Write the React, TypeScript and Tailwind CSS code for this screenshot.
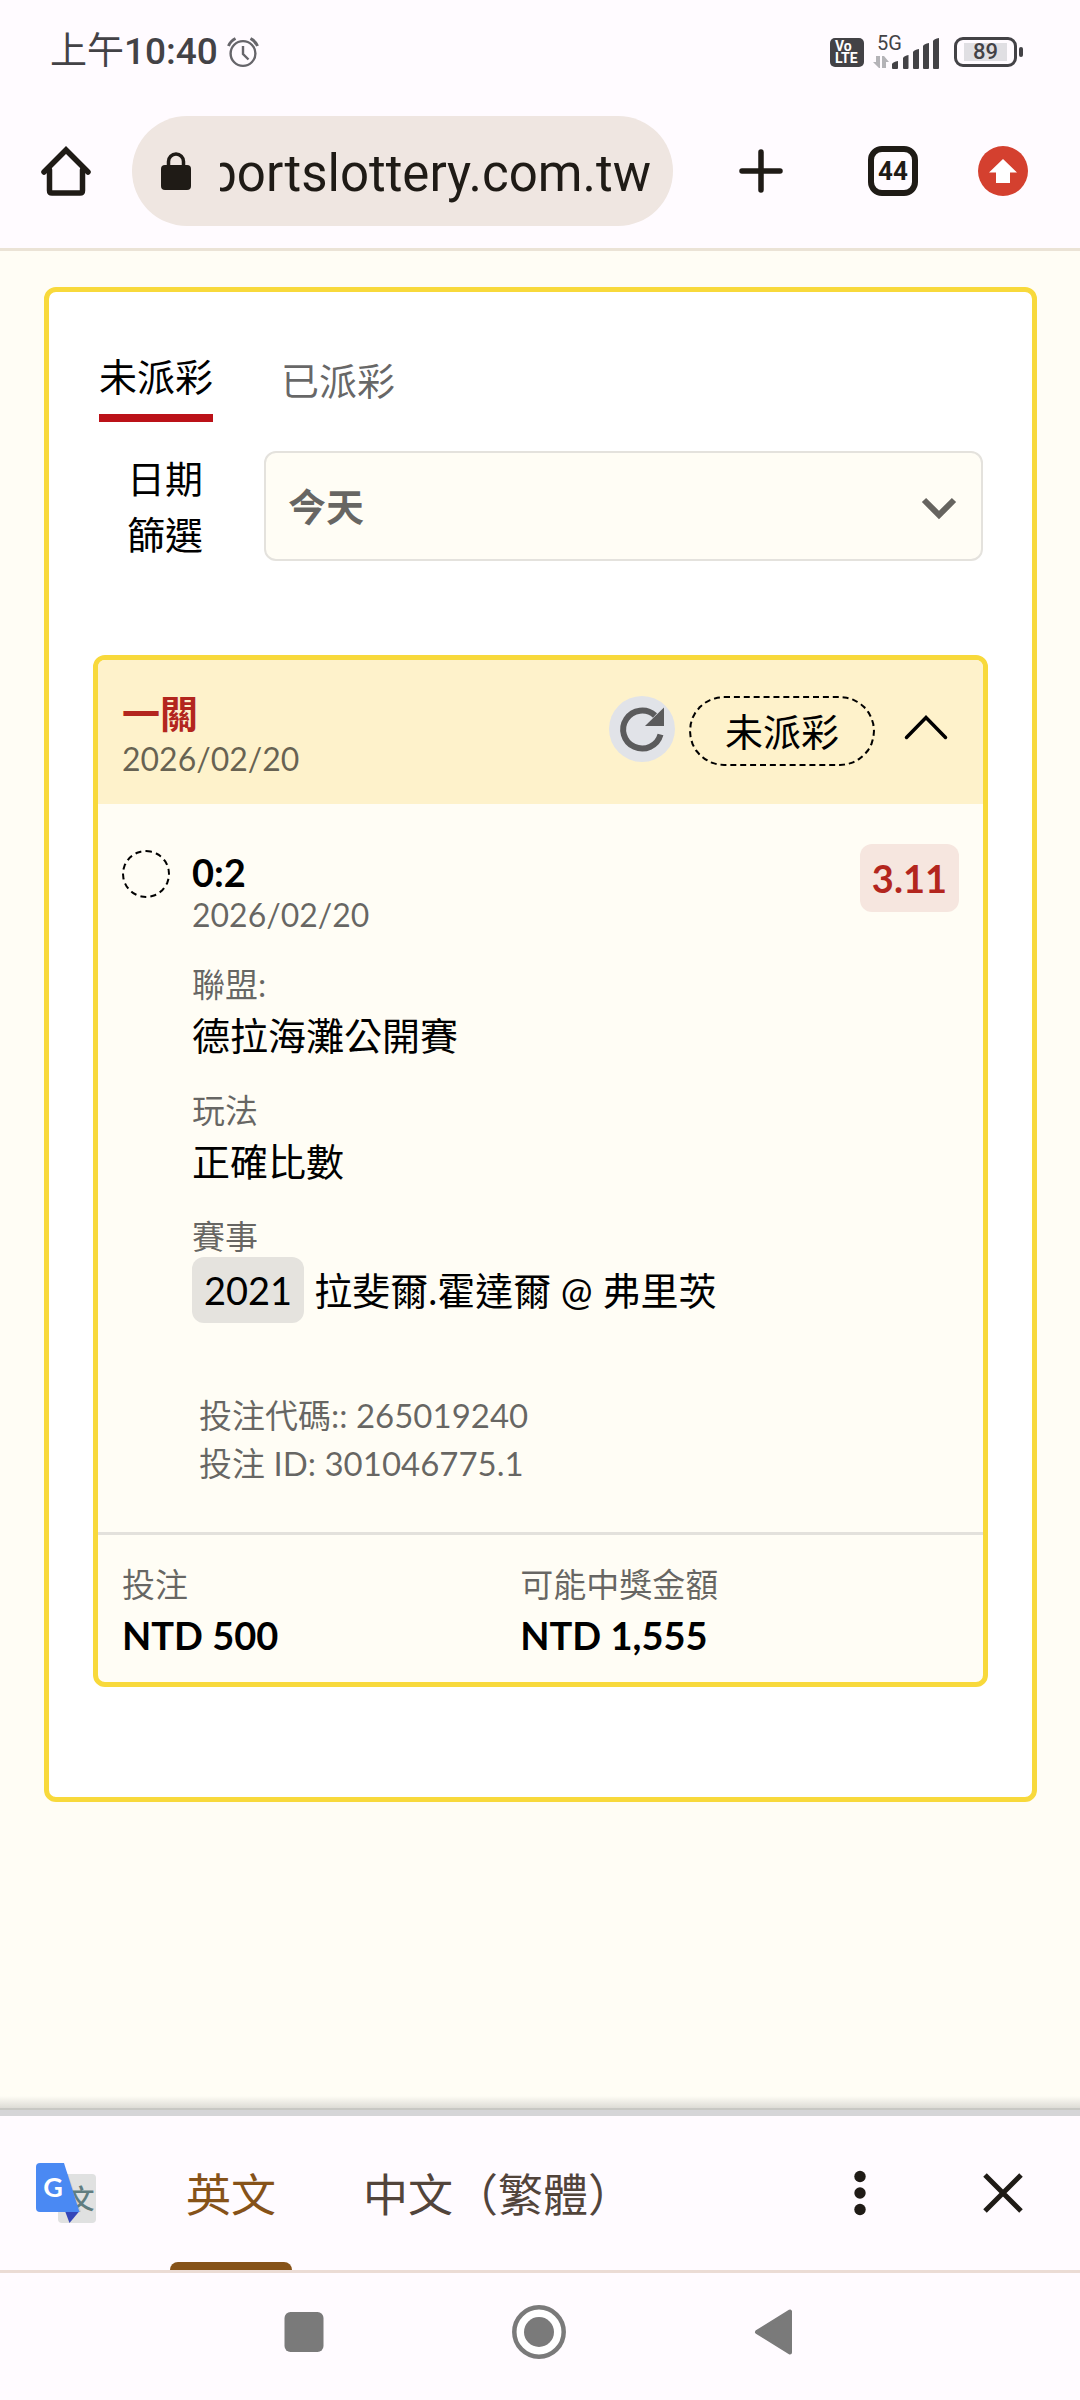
import { useState } from "react";
import { clsx } from "clsx";

const fontLato = "font-['Lato','Noto_Sans_CJK_TC',sans-serif]";
const fontRoboto = "font-['Roboto','Noto_Sans_CJK_TC',sans-serif]";

const details = [
  { label: "聯盟:", value: "德拉海灘公開賽" },
  { label: "玩法", value: "正確比數" },
];

const StatusBar = () => (
  <div className="flex h-11 items-center pl-[50px] pr-[57px] text-[#434246]">
    <span className="text-[37px] leading-[44px]">
      上午<span className="font-medium">10:40</span>
    </span>
    <svg className="ml-[9px] h-8 w-8" viewBox="0 0 32 32" fill="none" stroke="#66656a" strokeWidth="2.4">
      <circle cx="16" cy="17.5" r="12.4" />
      <path d="M16 10v8l5.5 5.5" />
      <path d="M1.5 10Q3.500 5 8.500 2.500M30.500 10Q28.500 5 23.500 2.500" strokeWidth="3" />
    </svg>

    <div className="ml-auto flex items-center">
      <div className="flex h-[29px] w-[34px] flex-col justify-center rounded-[5px] bg-[#434246] pl-[5px] text-[14px] font-bold leading-[12px] text-white">
        <span>Vo</span>
        <span>LTE</span>
      </div>
      <div className="relative ml-[9px] h-[34px] w-[68px]">
        <svg className="h-[34px] w-[68px]" viewBox="0 0 68 34">
          <path d="M0 27h3V21h4v12H6zM9 21h2l5 6h-3v6H9z" fill="#b4b3b7" />
          <g fill="#434246">
            <path d="M19 29q1-2 6-3v7q0 1-1 1h-4q-1 0-1-1z" />
            <path d="M30 23q1-2 5.500-3v13q0 1-1 1H31q-1 0-1-1z" />
            <path d="M40 17q1-2 6-3v19q0 1-1 1h-4q-1 0-1-1z" />
            <path d="M50 11q1-2 6-3v25q0 1-1 1h-4q-1 0-1-1z" />
            <path d="M60 6q1-2 6-3v30q0 1-1 1h-4q-1 0-1-1z" />
          </g>
        </svg>
        <span className="absolute left-1 top-0 text-[20px] leading-[17px]">5G</span>
      </div>
      <div className="ml-[13px] flex h-[30px] w-[63px] items-center justify-center rounded-[9px] border-3 border-[#434246]">
        <span className="flex h-[18px] w-[43px] items-center justify-center bg-[#e0dfe3] text-[22px] font-medium leading-[18px]">
          89
        </span>
      </div>
      <span className="ml-0.5 h-[10px] w-1 rounded-sm bg-[#434246]"></span>
    </div>
  </div>
);

const AddressBar = () => {
  const [url, setUrl] = useState("sportslottery.com.tw");

  return (
    <div className="mt-[42px] flex items-center pl-[41px] pr-[52px]">
      <button aria-label="首頁" className="shrink-0">
        <svg className="h-[50px] w-[50px]" viewBox="0 0 50 50" fill="none" stroke="#1f1b16" strokeWidth="5.500" strokeLinecap="round" strokeLinejoin="round">
          <path d="M8.500 24v20.500q0 2.500 2.500 2.500h28q2.500 0 2.500-2.500V24" />
          <path d="M3 26 25 4l22 22" strokeLinejoin="miter" />
        </svg>
      </button>
      <div className="ml-[41px] flex h-[110px] min-w-0 flex-1 items-center rounded-full bg-[#efe6e1] pl-[29px] pr-[22px]">
        <svg className="h-[38px] w-[30px] shrink-0" viewBox="0 0 30 38">
          <rect x="0" y="13" width="30" height="25" rx="4" fill="#1f1b16" />
          <path d="M7.500 14V9.500a7.500 7.500 0 0 1 15 0V14" fill="none" stroke="#1f1b16" strokeWidth="3.500" />
        </svg>
        {/* rtl keeps the end of the domain in view when the address is too long */}
        <input
          dir="rtl"
          aria-label="網址"
          value={url}
          onChange={(e) => setUrl(e.target.value)}
          className="ml-[29px] h-[110px] min-w-0 flex-1 bg-transparent pt-[5px] text-[51px] text-[#1f1b16] outline-none"
        />
      </div>
      <button aria-label="新分頁" className="ml-[63px] shrink-0">
        <svg className="h-[50px] w-[50px]" viewBox="0 0 50 50" stroke="#1f1b16" strokeWidth="5.500" strokeLinecap="round">
          <path d="M25 6v38M6 25h38" />
        </svg>
      </button>
      <button className="ml-[82px] flex h-[50px] w-[50px] shrink-0 items-center justify-center rounded-[14px] border-6 border-[#1f1b16] text-[26px] font-bold leading-none text-[#1f1b16]">
        44
      </button>
      <button aria-label="更新" className="ml-[60px] shrink-0">
        <svg className="h-[50px] w-[50px]" viewBox="0 0 50 50">
          <circle cx="25" cy="25" r="25" fill="#d4402f" />
          <path d="M25 13 39 26.500h-7V37H18V26.500h-7z" fill="#fff" />
        </svg>
      </button>
    </div>
  );
};

const BetCard = () => {
  const [open, setOpen] = useState(true);

  return (
    <article className="mt-[93px] overflow-hidden rounded-xl border-5 border-[#f8d93b] bg-[#fffdf5]">
      <header className="flex items-start justify-between bg-[#fef2cb] px-6 pb-6 pt-7">
        <div>
          <h2 className="text-[38px] font-bold leading-[50px] text-[#b3261e]">一關</h2>
          <p className="text-[32px] leading-[42px] text-black/60">2026/02/20</p>
        </div>
        <div className="mt-2 flex items-start">
          <button aria-label="重新整理">
            <svg className="h-[66px] w-[66px]" viewBox="0 0 66 66">
              <circle cx="33" cy="33" r="33" fill="#e1e3e8" />
              <path d="M51.500 38.500A19 19 0 1 1 46 19.500" fill="none" stroke="#5b5b5c" strokeWidth="6" />
              <path d="M55 11.500V30H36z" fill="#5b5b5c" />
            </svg>
          </button>
          <span className="ml-3.5 rounded-full border-2 border-dashed border-black px-[34px] text-[38px] leading-[66px]">
            未派彩
          </span>
          <button aria-label="收合" onClick={() => setOpen(!open)} className="ml-[18px]">
            <svg className={clsx("h-[62px] w-[66px]", !open && "rotate-180")} viewBox="0 0 66 62" fill="none" stroke="#000" strokeWidth="3.500" strokeLinecap="round">
              <path d="m13.500 41.500 19.500-20 19.500 20" />
            </svg>
          </button>
        </div>
      </header>

      {open && (
        <div className="flex items-start px-6 pb-[45px] pt-[46px]">
          <span className="h-12 w-12 shrink-0 rounded-full border-2 border-dashed border-black"></span>
          <div className="ml-[22px] min-w-0 flex-1">
            <h3 className="text-[38px] font-bold leading-[44px]">0:2</h3>
            <p className="text-[32px] leading-[42px] text-black/60">2026/02/20</p>
            <dl className="mt-[27px] flex flex-col gap-6">
              {details.map((item) => (
                <div key={item.label}>
                  <dt className="text-[33px] leading-[42px] text-black/60">{item.label}</dt>
                  <dd className="text-[38px] leading-[60px]">{item.value}</dd>
                </div>
              ))}
              <div>
                <dt className="text-[33px] leading-[42px] text-black/60">賽事</dt>
                <dd className="flex gap-2.5 text-[38px] leading-[66px]">
                  <span className="rounded-xl bg-[#e5e3de] px-3">2021</span>
                  <span>拉斐爾.霍達爾 @ 弗里茨</span>
                </dd>
              </div>
            </dl>
            <div className="mt-17 pl-[7px] text-[33px] leading-[48px] text-black/60">
              <p>投注代碼:: 265019240</p>
              <p>投注 ID: 301046775.1</p>
            </div>
          </div>
          <span className="-mt-1.5 rounded-xl bg-[#f6e6df] px-3 text-[38px] font-bold leading-[68px] text-[#b3261e]">
            3.11
          </span>
        </div>
      )}

      <dl className="flex border-t-3 border-[#e3e1dc] pb-[17px] pt-7">
        <div className="w-[45%] pl-6">
          <dt className="text-[33px] leading-[42px] text-black/60">投注</dt>
          <dd className="text-[38px] font-bold leading-[60px]">NTD 500</dd>
        </div>
        <div className="flex-1 pl-6">
          <dt className="text-[33px] leading-[42px] text-black/60">可能中獎金額</dt>
          <dd className="text-[38px] font-bold leading-[60px]">NTD 1,555</dd>
        </div>
      </dl>
    </article>
  );
};

const TranslateBar = () => {
  const [lang, setLang] = useState("en");

  return (
    <div className="flex h-[154px] items-center pl-9 pr-[47px]">
      <svg className="h-[62px] w-[62px] shrink-0" viewBox="0 0 62 62">
        <rect x="22" y="12" width="38" height="49" rx="4" fill="#e0e1e1" />
        <path d="M28 12h4l13 38h-2z" fill="#c9cbcc" />
        <text x="45" y="47" fontSize="27" fontWeight="500" textAnchor="middle" fill="#607d80" fontFamily="Noto Sans CJK TC">文</text>
        <path d="M29 49h14.500L33.500 61z" fill="#3446b8" />
        <path d="M4 1h24l15.500 49H4q-4 0-4-4V5q0-4 4-4z" fill="#4a89f3" />
        <text x="17" y="35" fontSize="27" fontWeight="700" textAnchor="middle" fill="#fff" fontFamily="Lato">G</text>
      </svg>
      <nav className="ml-[72px] flex self-stretch text-[45px]">
        <button
          onClick={() => setLang("en")}
          className={clsx("flex w-[122px] flex-col items-center justify-between", lang === "en" ? "text-[#865219]" : "text-[#52443b]")}
        >
          <span className="pt-3 leading-[134px]">英文</span>
          <span className={clsx("h-2 w-full rounded-t-lg", lang === "en" && "bg-[#865219]")}></span>
        </button>
        <button
          onClick={() => setLang("zh")}
          className={clsx("ml-[71px] flex flex-col items-center justify-between", lang === "zh" ? "text-[#865219]" : "text-[#52443b]")}
        >
          <span className="pt-3 leading-[134px]">中文（繁體）</span>
          <span className={clsx("h-2 w-full rounded-t-lg", lang === "zh" && "bg-[#865219]")}></span>
        </button>
      </nav>
      <button aria-label="更多選項" className="ml-auto">
        <svg className="h-[60px] w-[60px]" viewBox="0 0 60 60" fill="#1f1b16">
          <circle cx="30" cy="13.500" r="5.700" />
          <circle cx="30" cy="30" r="5.700" />
          <circle cx="30" cy="46.500" r="5.700" />
        </svg>
      </button>
      <button aria-label="關閉" className="ml-[83px]">
        <svg className="h-[60px] w-[60px]" viewBox="0 0 60 60" stroke="#1f1b16" strokeWidth="5">
          <path d="m12 12 36 36M48 12 12 48" />
        </svg>
      </button>
    </div>
  );
};

const SystemNav = () => (
  <nav className="flex justify-center gap-[175px] border-t-3 border-[#ebdcd5] pb-[38px] pr-0.5 pt-[29px]">
    <button aria-label="最近使用">
      <svg className="h-[60px] w-[60px]" viewBox="0 0 60 60">
        <rect x="10.500" y="10" width="39" height="40" rx="6" fill="#7a7a7a" />
      </svg>
    </button>
    <button aria-label="主畫面">
      <svg className="h-[60px] w-[60px]" viewBox="0 0 60 60">
        <circle cx="30" cy="30" r="24.700" fill="#fff" stroke="#7a7a7a" strokeWidth="4.500" />
        <circle cx="30" cy="30" r="15" fill="#7a7a7a" />
      </svg>
    </button>
    <button aria-label="返回">
      <svg className="h-[60px] w-[60px]" viewBox="0 0 60 60">
        <path d="M13 30 46 9.500v41z" fill="#7a7a7a" stroke="#7a7a7a" strokeWidth="4" strokeLinejoin="round" />
      </svg>
    </button>
  </nav>
);

const App = () => {
  const [tab, setTab] = useState("pending");

  return (
    <div className={clsx("flex min-h-screen flex-col bg-[#fffbff] text-black", fontLato)}>
      <header className={clsx("border-b-3 border-[#ebe3d6] pb-[22px] pt-[30px]", fontRoboto)}>
        <StatusBar />
        <AddressBar />
      </header>

      <main className="flex-1 bg-[#fffdf5] pl-11 pr-[43px] pt-9">
        <section className="rounded-xl border-5 border-[#f8d93b] bg-white px-11 pb-[110px] pt-14">
          <div className="flex items-start gap-17 pl-1.5 text-[38px] leading-[56px]">
            <button
              onClick={() => setTab("pending")}
              className={tab === "pending" ? "border-b-8 border-[#bb1118] pb-2.5" : "mt-1 text-black/60"}
            >
              未派彩
            </button>
            <button
              onClick={() => setTab("settled")}
              className={tab === "settled" ? "border-b-8 border-[#bb1118] pb-2.5" : "mt-1 text-black/60"}
            >
              已派彩
            </button>
          </div>

          <div className="mt-7 flex items-center pl-[34px] pr-[5px]">
            <label htmlFor="date" className="w-[76px] text-[38px] leading-[56px]">
              日期篩選
            </label>
            <div className="relative ml-[61px] flex-1">
              <select
                id="date"
                className="block h-[110px] w-full appearance-none rounded-xl border-2 border-[#e4e2dd] bg-[#fffdf5] pl-[22px] text-[38px] font-bold text-black/60"
              >
                <option>今天</option>
              </select>
              <svg className="pointer-events-none absolute right-[26px] top-[45px] h-6 w-9" viewBox="0 0 36 24" fill="none" stroke="#66645f" strokeWidth="6">
                <path d="m3 4 15 15L33 4" />
              </svg>
            </div>
          </div>

          <BetCard />
        </section>
      </main>

      <footer>
        <div className="h-3 bg-linear-to-b from-[#fffdf5] to-[#dddcd6]"></div>
        <div className="h-2 border-t-2 border-[#c8c8c3] bg-[#d5d5d7]"></div>
        <TranslateBar />
        <SystemNav />
      </footer>
    </div>
  );
};

export default App;
